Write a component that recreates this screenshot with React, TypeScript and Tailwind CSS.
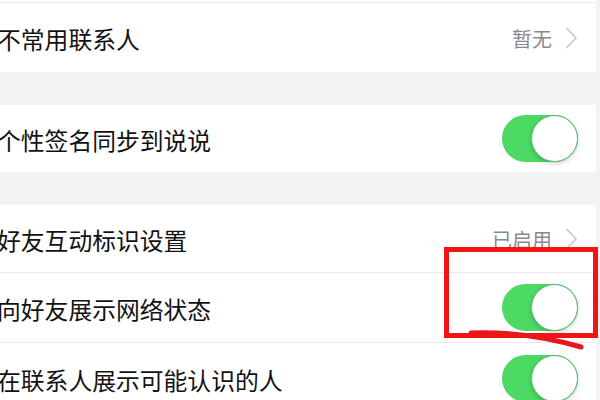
import React from 'react';

const FONT = '"Noto Sans CJK SC", "Noto Sans", sans-serif';

function Chevron() {
  return (
    <svg width="13" height="22" viewBox="0 0 13 22" aria-hidden>
      <path d="M2 1.5 L11 11 L2 20.5" fill="none" stroke="#c8c8cc" strokeWidth="1.8" strokeLinecap="round" strokeLinejoin="round" />
    </svg>
  );
}

function Toggle() {
  return (
    <div className="relative h-[47px] w-[76px] rounded-full bg-[#4cd964]">
      <div className="absolute right-0 top-0 h-[47px] w-[47px] rounded-full border border-[#5ab96a] bg-white shadow-[0_2px_4px_rgba(0,0,0,0.18)]" />
    </div>
  );
}

interface RowProps {
  label: string;
  height: string;
  border?: boolean;
  children?: React.ReactNode;
}

function Row({ label, height, border, children }: RowProps) {
  return (
    <div className={`flex items-center justify-between bg-white pr-[18px] ${height} ${border ? 'border-b border-[#e9e9eb]' : ''}`}>
      <span className="ml-[-3px] pt-[3px] text-[23.8px] leading-none text-[#121212]">{label}</span>
      {children}
    </div>
  );
}

function Detail({ text }: { text: string }) {
  return (
    <div className="flex items-center gap-[13px]">
      <span className="pt-[3px] text-[20px] leading-none text-[#8a8a8e]">{text}</span>
      <Chevron />
    </div>
  );
}

export default function App() {
  return (
    <div className="relative h-[400px] w-[600px] overflow-hidden bg-[#f3f3f5]" style={{ fontFamily: FONT }}>
      <div className="mr-[4px] flex flex-col">
        <div className="h-[3px] border-b border-[#e9e9eb] bg-white" />
        <Row label="不常用联系人" height="h-[69px]">
          <Detail text="暂无" />
        </Row>
        <div className="h-[33px]" />
        <Row label="个性签名同步到说说" height="h-[67px]">
          <Toggle />
        </Row>
        <div className="h-[33px]" />
        <Row label="好友互动标识设置" height="h-[68px]" border>
          <Detail text="已启用" />
        </Row>
        <Row label="向好友展示网络状态" height="h-[70px]" border>
          <Toggle />
        </Row>
        <Row label="在联系人展示可能认识的人" height="h-[70px]">
          <Toggle />
        </Row>
      </div>

      <div className="absolute left-[444px] top-[247px] h-[91px] w-[154px] border-[5px] border-[#f21414]" />
      <svg className="absolute left-0 top-0" width="600" height="400" aria-hidden>
        <path d="M471 333 C 500 332, 540 335, 581 347" fill="none" stroke="#e8171c" strokeWidth="5" strokeLinecap="round" />
      </svg>
    </div>
  );
}
